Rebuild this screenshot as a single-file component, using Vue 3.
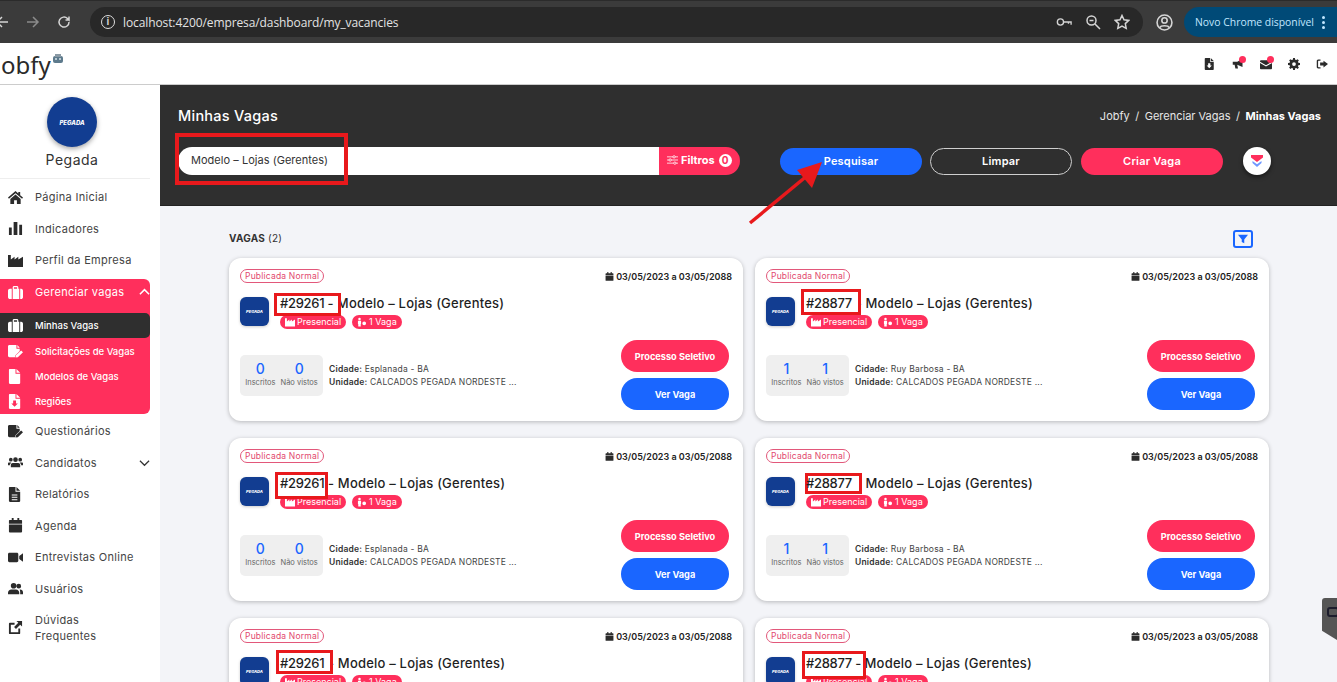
<script setup>
const icons = {
  home: 'M8 1 0 8l1 1.200L8 3.400l7 5.800L16 8l-3-2.500V2h-2v1.800L8 1zM2.500 9.500V15h4v-4h3v4h4V9.500L8 4.800 2.500 9.500z',
  bars: 'M1 7h3v8H1zM6 1h4v14H6zM12 4h3v11h-3z',
  industry: 'M0 2h3v5l4-3v3l4-3v3l5-3v11H0z',
  case: 'M5 4V2.500C5 1.700 5.700 1 6.500 1h3c.8 0 1.500.7 1.500 1.500V4h3c1 0 2 1 2 2v7c0 1-1 2-2 2h-1V4h-1v11H5V4H4v11H2c-1 0-2-1-2-2V6c0-1 1-2 2-2zm1.300 0h3.400V2.400H6.300z',
  sign: 'M1.500 1H9v4h3.500v2.500L8 12l-.5 2H1.500C.7 14 0 13.300 0 12.500v-10C0 1.700.7 1 1.500 1zM10 1l2.500 3H10zM14 7l2 1.800L10.500 14 8 14.500l.5-2.500z',
  file: 'M2 0h6v5h5v10c0 .5-.5 1-1 1H2c-.5 0-1-.5-1-1V1c0-.5.5-1 1-1zM9 0l4 4H9z',
  down: 'M2 0h6v5h5v10c0 .5-.5 1-1 1H2c-.5 0-1-.5-1-1V1c0-.5.5-1 1-1zm3.500 7v3H3.500L7 13.500 10.500 10H8.500V7zM9 0l4 4H9z',
  users: 'M3 3a2 2 0 1 1 0 4 2 2 0 0 1 0-4zm10 0a2 2 0 1 1 0 4 2 2 0 0 1 0-4zM8 2.500a2.500 2.500 0 1 1 0 5 2.500 2.500 0 0 1 0-5zM5 8.500h6c1 0 2 1 2 2V13H3v-2.500c0-1 1-2 2-2zM0 11V9c0-.6.5-1 1-1h2.500L2 10v1zM16 11V9c0-.6-.5-1-1-1h-2.500l1.500 2v1z',
  report: 'M2 0h6v5h5v10c0 .5-.5 1-1 1H2c-.5 0-1-.5-1-1V1c0-.5.5-1 1-1zm2 8v1h6V8zm0 2.500v1h6v-1zm0 2.500v1h6v-1zM9 0l4 4H9z',
  cal: 'M4 0h2v2h4V0h2v2h2c.6 0 1 .5 1 1v3H1V3c0-.5.4-1 1-1h2zM1 7h14v7.500c0 .6-.4 1-1 1H2c-.6 0-1-.4-1-1z',
  video: 'M1.500 3h8c.8 0 1.500.7 1.500 1.500v7c0 .8-.7 1.500-1.500 1.500h-8C.7 13 0 12.300 0 11.500v-7C0 3.700.7 3 1.500 3zM12 6.500 16 3.500v9l-4-3z',
  friends: 'M6 2a3 3 0 1 1 0 6 3 3 0 0 1 0-6zm5.500 1a2.500 2.500 0 1 1 0 5 2.500 2.500 0 0 1 0-5zM3.500 9h5c1.900 0 3.500 1.600 3.500 3.500V14H0v-1.500C0 10.600 1.600 9 3.500 9zm9 0h.5c1.700 0 3 1.300 3 3v2h-3v-2c0-1-.2-2-.5-3z',
  ext: 'M9 1h6v6l-2-2-4.500 4.500-2-2L11 3zM2 3h5v2H3v8h8V9h2v5c0 .6-.4 1-1 1H2c-.6 0-1-.4-1-1V4c0-.6.4-1 1-1z'
}
const nav1 = [
  { label: 'Página Inicial', icon: 'home' },
  { label: 'Indicadores', icon: 'bars' },
  { label: 'Perfil da Empresa', icon: 'industry' }
]
const subs = [
  { label: 'Minhas Vagas', icon: 'case', active: true },
  { label: 'Solicitações de Vagas', icon: 'sign' },
  { label: 'Modelos de Vagas', icon: 'file' },
  { label: 'Regiões', icon: 'down' }
]
const nav2 = [
  { label: 'Questionários', icon: 'sign' },
  { label: 'Candidatos', icon: 'users', chev: true },
  { label: 'Relatórios', icon: 'report' },
  { label: 'Agenda', icon: 'cal' },
  { label: 'Entrevistas Online', icon: 'video' },
  { label: 'Usuários', icon: 'friends' },
  { label: 'Dúvidas Frequentes', icon: 'ext', wrap: true }
]
const A = { id: '#29261', city: 'Esplanada - BA', a: 0 }
const B = { id: '#28877', city: 'Ruy Barbosa - BA', a: 1 }
const cards = [
  { ...A, inside: true, box: 'b1' }, { ...B, inside: false, box: 'b2' },
  { ...A, inside: false, box: 'b3' }, { ...B, inside: false, box: 'b4' },
  { ...A, inside: false, box: 'b5' }, { ...B, inside: true, box: 'b6' }
]
</script>

<template>
  <div class="page">
    <div class="chrome">
      <div class="chrome-nav">
        <svg class="cicon back" viewBox="0 0 16 16"><path d="M14 8H3M8 3 3 8l5 5" /></svg>
        <svg class="cicon fwd" viewBox="0 0 16 16"><path d="M2 8h11M8 3l5 5-5 5" /></svg>
        <svg class="cicon" viewBox="0 0 16 16"><path d="M13 8a5 5 0 1 1-1.500-3.500L13 6V2.500M13 6H9.500" /></svg>
      </div>
      <div class="omni">
        <span class="info-dot">i</span>
        <span class="url">localhost:4200/empresa/dashboard/my_vacancies</span>
        <span class="omni-icons">
          <svg class="cicon" viewBox="0 0 18 16"><circle cx="5" cy="8" r="3.500" /><path d="M8.500 8H17v3M14 8v2" /></svg>
          <svg class="cicon" viewBox="0 0 16 16"><circle cx="6.500" cy="6.500" r="4.500" /><path d="M10 10l5 5M4.500 6.500h4" /></svg>
          <svg class="cicon" viewBox="0 0 16 16"><path d="m8 1.500 2 4.300 4.700.6-3.400 3.200.9 4.700L8 12l-4.200 2.300.9-4.700L1.300 6.400 6 5.800z" /></svg>
        </span>
      </div>
      <svg class="cicon avatar-c" viewBox="0 0 16 16"><circle cx="8" cy="8" r="7" /><circle cx="8" cy="6" r="2.500" /><path d="M3.500 13c1-2.500 8-2.500 9 0" /></svg>
      <div class="update">Novo Chrome disponível<span class="dots"><i></i><i></i><i></i></span></div>
    </div>

    <header class="topbar">
      <div class="brand">obfy<svg class="robot" viewBox="0 0 12 10"><rect x="1" y="2" width="10" height="7" rx="2" fill="#5d7a8c" /><rect x="3" y="0" width="6" height="3" fill="#8a9aa5" /><circle cx="4" cy="5" r="1" fill="#d8e4ea" /><circle cx="8" cy="5" r="1" fill="#d8e4ea" /></svg></div>
      <div class="top-icons">
        <span class="ti"><svg viewBox="0 0 16 16"><path :d="icons.down" /></svg></span>
        <span class="ti dot"><svg viewBox="0 0 16 16"><path d="M1 5h6l7-4v11L7 9l1 5H4.500L3.500 9H1z" /></svg></span>
        <span class="ti dot"><svg viewBox="0 0 16 16"><path d="M1.500 3h13c.8 0 1.500.7 1.500 1.500V5L8 9.500 0 5v-.5C0 3.700.7 3 1.500 3zM0 6.800l8 4.500 8-4.500v6.700c0 .8-.7 1.500-1.500 1.500h-13C.7 15 0 14.300 0 13.500z" /></svg></span>
        <span class="ti"><svg viewBox="0 0 16 16"><path fill-rule="evenodd" d="M6.800 0h2.400l.4 2.200 1.400.6L12.800 1.500l1.700 1.700-1.300 1.800.6 1.400 2.200.4v2.400l-2.200.4-.6 1.400 1.300 1.800-1.700 1.700-1.800-1.300-1.400.6-.4 2.200H6.800l-.4-2.200-1.400-.6-1.800 1.300-1.700-1.700L2.800 11l-.6-1.400L0 9.200V6.800l2.200-.4.6-1.400L1.500 3.200l1.700-1.700L5 2.800l1.400-.6zM8 5.500a2.500 2.500 0 1 0 0 5 2.500 2.500 0 0 0 0-5z" /></svg></span>
        <span class="ti"><svg viewBox="0 0 16 16"><path d="M6 2H3C1.500 2 1 3 1 4v8c0 1 .5 2 2 2h3v-1.800H3.500c-.4 0-.7-.3-.7-.7V4.500c0-.4.3-.7.7-.7H6zM10 3.500 16 8l-6 4.500V10H5.500V6H10z" /></svg></span>
      </div>
    </header>

    <div class="body">
      <aside class="side">
        <div class="company">
          <div class="round-logo"><b>PEGADA</b></div>
          <div class="company-name">Pegada</div>
        </div>
        <nav class="nav">
          <a v-for="n in nav1" :key="n.label" class="item">
            <svg class="ni" viewBox="0 0 16 16"><path :d="icons[n.icon]" /></svg><span>{{ n.label }}</span>
          </a>
          <div class="group">
            <a class="item head">
              <svg class="ni" viewBox="0 0 16 16"><path :d="icons.case" /></svg><span>Gerenciar vagas</span>
              <svg class="chev" viewBox="0 0 12 8"><path d="M1 6.500 6 1.500l5 5" /></svg>
            </a>
            <a v-for="s in subs" :key="s.label" class="sub" :class="{ on: s.active }">
              <svg class="si" viewBox="0 0 16 16"><path :d="icons[s.icon]" /></svg><span>{{ s.label }}</span>
            </a>
          </div>
          <a v-for="n in nav2" :key="n.label" class="item" :class="{ two: n.wrap }">
            <svg class="ni" viewBox="0 0 16 16"><path :d="icons[n.icon]" /></svg><span>{{ n.label }}</span>
            <svg v-if="n.chev" class="chev dark" viewBox="0 0 12 8"><path d="M1 1.500 6 6.500l5-5" /></svg>
          </a>
        </nav>
      </aside>

      <main class="main">
        <section class="hero">
          <div class="hero-top">
            <h1>Minhas Vagas</h1>
            <div class="crumbs"><span>Jobfy</span><span>/</span><span>Gerenciar Vagas</span><span>/</span><b>Minhas Vagas</b></div>
          </div>
          <div class="hero-row">
            <div class="search">
              <div class="input">Modelo – Lojas (Gerentes)</div>
              <div class="filters">
                <svg viewBox="0 0 14 12"><path d="M0 2h14M0 6h14M0 10h14" /><circle cx="9" cy="2" r="1.500" /><circle cx="4" cy="6" r="1.500" /><circle cx="10" cy="10" r="1.500" /></svg>
                Filtros <span class="zero">0</span>
              </div>
            </div>
            <button class="btn blue">Pesquisar</button>
            <button class="btn ghost">Limpar</button>
            <button class="btn pink">Criar Vaga</button>
            <button class="round"><svg viewBox="0 0 12 12"><path d="M0 0h12v2.500L6 7 0 2.500z" fill="#ff2f5c" /><path d="M1.500 6 6 9.200 10.500 6v2L6 12 1.500 8z" fill="#6f97ff" /></svg></button>
          </div>
        </section>

        <section class="content">
          <div class="list-head">
            <div class="list-title"><b>VAGAS</b> (2)</div>
            <button class="funnel"><svg viewBox="0 0 12 12"><path d="M0 1h12L7.500 6.500V11l-3-1.500v-3z" /></svg></button>
          </div>
          <div class="grid">
            <article v-for="(c, i) in cards" :key="i" class="card">
              <div class="card-top">
                <span class="status">Publicada Normal</span>
                <span class="date"><svg viewBox="0 0 16 16"><path :d="icons.cal" /></svg>03/05/2023 a 03/05/2088</span>
              </div>
              <div class="card-main">
                <div class="sq-logo"><b>PEGADA</b></div>
                <div class="card-titles">
                  <h2><span class="num"><i class="mark" :class="c.box"></i><span class="num-t">{{ c.id }}<template v-if="c.inside"> -</template></span></span><template v-if="!c.inside"> -</template> Modelo – Lojas (Gerentes)</h2>
                  <div class="chips">
                    <span class="chip"><svg viewBox="0 0 16 16"><path :d="icons.industry" /></svg>Presencial</span>
                    <span class="chip"><svg viewBox="0 0 16 16"><path d="M4 1a2 2 0 1 1 0 4 2 2 0 0 1 0-4zM1.500 6h5v5H6v4H2v-4h-.5zM11.500 7a3 3 0 1 1 0 6 3 3 0 0 1 0-6z" /></svg>1 Vaga</span>
                  </div>
                </div>
              </div>
              <div class="card-foot">
                <div class="stats">
                  <div class="stat"><strong>{{ c.a }}</strong><small>Inscritos</small></div>
                  <div class="stat"><strong>{{ c.a }}</strong><small>Não vistos</small></div>
                </div>
                <div class="place">
                  <div><b>Cidade:</b> {{ c.city }}</div>
                  <div><b>Unidade:</b> CALCADOS PEGADA NORDESTE ...</div>
                </div>
                <div class="actions">
                  <button class="cbtn pink">Processo Seletivo</button>
                  <button class="cbtn blue">Ver Vaga</button>
                </div>
              </div>
            </article>
          </div>
        </section>
      </main>
    </div>

    <svg class="arrow" viewBox="0 0 90 70"><path d="M2 68 60 20" stroke="#e8191c" stroke-width="3.500" fill="none" /><path d="M74 7 49 15 64 33z" fill="#e8191c" /></svg>
    <div class="search-mark"></div>
    <div class="floater"><span></span></div>
  </div>
</template>

<style>
html, body { margin: 0; overflow: hidden; background: #f3f4f8; }
</style>

<style scoped>
.page { position: relative; width: 1337px; height: 682px; overflow: hidden; display: flex; flex-direction: column; font-family: Inter, "Liberation Sans", sans-serif; color: #2b2b2b; background: #f3f4f8; }
h1, h2 { margin: 0; font-weight: inherit; }
a { display: flex; }
button { font-family: inherit; border: 0; padding: 0; cursor: pointer; }

.chrome { height: 43px; flex: none; box-sizing: border-box; background: #3b3b3b; border-top: 1px solid #2b2b2b; display: flex; align-items: center; color: #d6d6d6; }
.chrome-nav { display: flex; gap: 15px; width: 90px; flex: none; margin-left: -6px; margin-right: 6px; align-items: center; }
.cicon { width: 16px; height: 16px; fill: none; stroke: #d5d5d5; stroke-width: 1.500; flex: none; }
.fwd { stroke: #8b8b8b; }
.omni { width: 1053px; height: 30px; background: #282828; border-radius: 15px; display: flex; align-items: center; box-sizing: border-box; padding: 0 13px 0 8px; flex: none; }
.info-dot { width: 12px; height: 12px; border: 1.500px solid #ddd; border-radius: 50%; font: 700 10px/12px "Liberation Sans", sans-serif; text-align: center; margin-right: 8px; margin-left: 3px; }
.url { font: 12px "Open Sans", sans-serif; color: #e3e3e3; letter-spacing: -.1px; }
.omni-icons { margin-left: auto; display: flex; gap: 13px; }
.avatar-c { margin-left: 13px; width: 17px; height: 17px; }
.update { margin-left: 11px; width: 160px; height: 30px; flex: none; box-sizing: border-box; background: #004a77; border-radius: 15px 0 0 15px; font: 10.400px/30px "Open Sans", sans-serif; color: #c2e7ff; padding-left: 11px; display: flex; align-items: center; white-space: nowrap; }
.dots { display: flex; flex-direction: column; gap: 2px; margin-left: 8px; }
.dots i { width: 3px; height: 3px; border-radius: 50%; background: #c2e7ff; display: block; }

.topbar { height: 42px; flex: none; box-sizing: border-box; background: #fff; display: flex; align-items: center; justify-content: space-between; padding-right: 9.500px; border-bottom: 1px solid #ccc; }
.brand { font: 400 24px/1 "Noto Sans", sans-serif; color: #2a2a2a; position: relative; top: 1px; padding-left: 1px; display: flex; }
.robot { width: 12px; height: 10px; margin-top: 1px; margin-left: 1px; }
.top-icons { display: flex; gap: 16px; }
.ti { position: relative; width: 12px; height: 12px; display: block; }
.ti svg { width: 12px; height: 12px; display: block; fill: #2b2b2b; }
.ti.dot::after { content: ""; position: absolute; top: -2px; right: -2px; width: 7px; height: 7px; border-radius: 50%; background: #ff2f5c; }

.body { flex: 1; display: flex; min-height: 0; }
.side { width: 160px; flex: none; background: #fff; box-sizing: border-box; padding-right: 10px; }
.company { display: flex; flex-direction: column; align-items: center; padding: 12px 6px 0 0; height: 94px; box-sizing: border-box; border-bottom: 1px solid #eee; }
.round-logo { width: 50px; height: 50px; border-radius: 50%; background: #123d91; box-shadow: 0 2px 5px rgba(0,0,0,.35); display: flex; align-items: center; justify-content: center; color: #fff; flex: none; }
.round-logo b { font-size: 6px; font-style: italic; font-weight: 800; }
.company-name { font-size: 14px; letter-spacing: .5px; margin-top: 4px; color: #333; }
.nav { display: flex; flex-direction: column; font-size: 11px; }
.item { height: 31.500px; flex: none; align-items: center; color: #444; letter-spacing: .3px; padding-left: 8px; position: relative; }
.nav > .item:first-child { margin-top: 2.500px; }
.ni { width: 15px; height: 15px; fill: #2b2b2b; margin-right: 12px; flex: none; }
.item.two { height: 46px; line-height: 16px; }
.item.two span { width: 80px; }
.chev { position: absolute; right: 0; top: 50%; margin-top: -4px; width: 11px; height: 8px; fill: none; stroke: #fff; stroke-width: 1.700; }
.chev.dark { stroke: #333; stroke-width: 1.300; }
.group { background: #ff2f5c; border-radius: 0 6px 6px 0; height: 135px; color: #fff; margin-top: 2.500px; margin-bottom: 2px; overflow: hidden; flex: none; }
.head { color: #fff; height: 27px; margin-bottom: 7px; }
.head .ni { fill: #fff; }
.sub { height: 25px; align-items: center; padding-left: 8px; font-size: 9.500px; font-weight: 500; color: #fff; }
.sub.on { background: #2f2f2f; border-radius: 0 5px 5px 0; margin-bottom: 1px; }
.si { width: 15px; height: 15px; fill: #fff; margin-right: 12px; flex: none; }

.main { flex: 1; min-width: 0; display: flex; flex-direction: column; }
.hero { height: 121px; flex: none; box-sizing: border-box; background: #2f2f2f; padding: 22px 16px 0 18px; color: #fff; border-bottom: 1px solid #222; }
.hero-top { display: flex; justify-content: space-between; align-items: center; height: 17px; }
.hero h1 { font-size: 14.500px; font-weight: 500; letter-spacing: .25px; }
.crumbs { font-size: 11px; display: flex; gap: 5.500px; color: #e6e6e6; }
.crumbs b { color: #fff; font-weight: 700; }
.hero-row { display: flex; align-items: center; margin-top: 23px; }
.search { width: 562px; height: 28px; display: flex; border-radius: 14px; overflow: hidden; flex: none; margin-right: 40px; }
.input { width: 481px; background: #fff; color: #333; font-size: 11px; line-height: 26px; padding-left: 13px; box-sizing: border-box; letter-spacing: .03px; }
.filters { flex: 1; background: #ff2f5c; color: #fff; font-size: 11px; font-weight: 700; display: flex; align-items: center; gap: 3px; padding: 0 0 2px 8px; }
.filters svg { width: 11px; height: 10px; fill: #ff2f5c; stroke: #fff; stroke-width: 1; }
.zero { width: 13px; height: 13px; background: #fff; color: #ff2f5c; border-radius: 50%; font-size: 10px; line-height: 13px; text-align: center; margin-left: 1px; }
.btn { width: 142px; height: 27px; border-radius: 14px; color: #fff; font-size: 11px; font-weight: 600; flex: none; letter-spacing: .2px; }
.btn.blue { background: #1a66ff; margin-right: 8px; }
.btn.pink { background: #ff2f5c; margin-right: 20px; }
.btn.ghost { background: transparent; border: 1px solid #cfcfcf; box-sizing: border-box; margin-right: 9px; }
.round { width: 28px; height: 28px; border-radius: 50%; background: #fff; box-shadow: 0 2px 4px rgba(0,0,0,.5); display: flex; align-items: center; justify-content: center; flex: none; }
.round svg { width: 12px; height: 12px; }

.content { flex: 1; min-height: 0; padding: 24px 68px 0 69px; }
.list-head { display: flex; justify-content: space-between; align-items: center; height: 18px; margin-bottom: 10px; }
.list-title { font-size: 10px; color: #333; letter-spacing: .25px; padding-bottom: 2px; }
.list-title b { font-weight: 700; }
.funnel { width: 20px; height: 18px; box-sizing: border-box; background: #f3f4f8; border: 2px solid #1a66ff; border-radius: 3px; margin-right: 16px; display: flex; align-items: center; justify-content: center; }
.funnel svg { width: 10px; height: 10px; fill: #1a66ff; }
.grid { display: grid; grid-template-columns: 514px 514px; column-gap: 12px; row-gap: 17px; }
.card { height: 163px; box-sizing: border-box; background: #fff; border-radius: 12px; box-shadow: 0 1px 4px rgba(0,0,0,.25); padding: 11px 11px 0; display: flex; flex-direction: column; }
.card-top { display: flex; justify-content: space-between; align-items: center; height: 14px; }
.status { border: 1px solid #e2577a; border-radius: 8px; padding: 0 4px; font-size: 8.500px; line-height: 12px; color: #e2476d; letter-spacing: .2px; }
.date { font-size: 9px; font-weight: 600; color: #222; display: flex; align-items: center; gap: 2px; }
.date svg { width: 9px; height: 9px; fill: #2b2b2b; }
.card-main { display: flex; margin-top: 14px; height: 33px; }
.sq-logo { width: 29px; height: 29px; border-radius: 6px; background: #123d91; color: #fff; display: flex; align-items: center; justify-content: center; margin-right: 11px; flex: none; box-shadow: 0 1px 3px rgba(0,0,0,.2); }
.sq-logo b { font-size: 4px; font-style: italic; font-weight: 800; }
.card-titles { display: flex; flex-direction: column; }
.card-titles h2 { font-size: 13px; font-weight: 500; line-height: 12px; color: #1f1f1f; white-space: nowrap; letter-spacing: .2px; height: 12px; }
.num { position: relative; letter-spacing: -.3px; }
.num-t { position: relative; z-index: 2; }
.mark { position: absolute; z-index: 1; background: #fff; border: 3px solid #e8191c; box-sizing: border-box; }
.b1 { left: -6px; top: -2px; width: 67px; height: 23px; }
.b2 { left: -5px; top: -6px; width: 60px; height: 26px; }
.b3 { left: -5px; top: -3px; width: 53px; height: 27px; }
.b4 { left: -1px; top: -2px; width: 57px; height: 21px; }
.b5 { left: -4px; top: -5px; width: 57px; height: 24px; }
.b6 { left: -4px; top: -4px; width: 64px; height: 28px; }
.chips { display: flex; gap: 6px; margin-top: 6px; }
.chip { height: 14px; border-radius: 7px; background: #ff2f5c; color: #fff; font-size: 9px; line-height: 14px; padding: 0 5px; display: flex; align-items: center; gap: 2px; }
.chip svg { width: 10px; height: 10px; fill: #fff; }
.card-foot { display: flex; align-items: center; margin-top: 10px; }
.stats { width: 83px; height: 41px; border-radius: 5px; background: #efefef; display: flex; justify-content: center; gap: 5px; flex: none; padding-top: 5.500px; box-sizing: border-box; }
.stat { display: flex; flex-direction: column; align-items: center; }
.stat strong { font-size: 14px; line-height: 18px; font-weight: 500; color: #1a66ff; }
.stat small { font-size: 7.500px; line-height: 10px; color: #666; }
.place { margin-left: 6px; font-size: 8.500px; line-height: 13px; color: #444; letter-spacing: .2px; flex: 1; white-space: nowrap; margin-top: 1px; }
.place b { font-weight: 600; color: #333; }
.actions { display: flex; flex-direction: column; gap: 6px; margin-right: 3px; }
.cbtn { width: 108px; height: 32px; border-radius: 16px; color: #fff; font-size: 9.200px; font-weight: 700; }
.cbtn.pink { background: #ff2f5c; }
.cbtn.blue { background: #1a66ff; }

.arrow { position: absolute; left: 748px; top: 155px; width: 90px; height: 70px; }
.search-mark { position: absolute; left: 175px; top: 133px; width: 173px; height: 52px; border: 4px solid #e8191c; box-sizing: border-box; }
.floater { position: absolute; right: 0; top: 598px; width: 15px; height: 42px; background: #555; border-radius: 3px 0 0 0; clip-path: polygon(0 0, 100% 0, 100% 100%, 0 78%); }
.floater span { position: absolute; left: 5px; top: 9px; width: 12px; height: 10px; border: 2px solid #1c1c2c; border-radius: 3px; box-sizing: border-box; }
</style>
